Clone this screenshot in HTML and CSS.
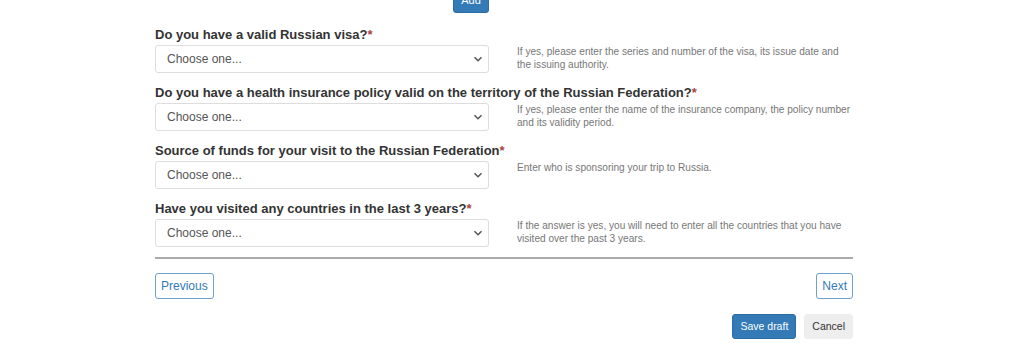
FILE: index.html
```html
<!DOCTYPE html>
<html>
<head>
<meta charset="utf-8">
<link rel="stylesheet" href="styles.css">
</head>
<body>
<div class="page">
  <div class="add-row">
    <div class="add-col"><button class="btn btn-primary btn-add">Add</button></div>
  </div>

  <div class="group">
    <label class="lbl">Do you have a valid Russian visa?<span class="req">*</span></label>
    <div class="row">
      <div class="sel-wrap">
        <select class="sel"><option>Choose one...</option></select>
        <svg class="chev" width="10" height="6" viewBox="0 0 10 6"><path d="M1.5 1.2 L5 4.7 L8.5 1.2" fill="none" stroke="#555" stroke-width="1.5"/></svg>
      </div>
      <p class="help">If yes, please enter the series and number of the visa, its issue date and the issuing authority.</p>
    </div>
  </div>

  <div class="group">
    <label class="lbl">Do you have a health insurance policy valid on the territory of the Russian Federation?<span class="req">*</span></label>
    <div class="row">
      <div class="sel-wrap">
        <select class="sel"><option>Choose one...</option></select>
        <svg class="chev" width="10" height="6" viewBox="0 0 10 6"><path d="M1.5 1.2 L5 4.7 L8.5 1.2" fill="none" stroke="#555" stroke-width="1.5"/></svg>
      </div>
      <p class="help">If yes, please enter the name of the insurance company, the policy number and its validity period.</p>
    </div>
  </div>

  <div class="group">
    <label class="lbl">Source of funds for your visit to the Russian Federation<span class="req">*</span></label>
    <div class="row">
      <div class="sel-wrap">
        <select class="sel"><option>Choose one...</option></select>
        <svg class="chev" width="10" height="6" viewBox="0 0 10 6"><path d="M1.5 1.2 L5 4.7 L8.5 1.2" fill="none" stroke="#555" stroke-width="1.5"/></svg>
      </div>
      <p class="help">Enter who is sponsoring your trip to Russia.</p>
    </div>
  </div>

  <div class="group last">
    <label class="lbl">Have you visited any countries in the last 3 years?<span class="req">*</span></label>
    <div class="row">
      <div class="sel-wrap">
        <select class="sel"><option>Choose one...</option></select>
        <svg class="chev" width="10" height="6" viewBox="0 0 10 6"><path d="M1.5 1.2 L5 4.7 L8.5 1.2" fill="none" stroke="#555" stroke-width="1.5"/></svg>
      </div>
      <p class="help">If the answer is yes, you will need to enter all the countries that you have visited over the past 3 years.</p>
    </div>
  </div>

  <hr class="sep">

  <div class="nav">
    <button class="btn btn-outline">Previous</button>
    <button class="btn btn-outline">Next</button>
  </div>

  <div class="actions">
    <button class="btn btn-primary btn-sm">Save draft</button>
    <button class="btn btn-light btn-sm">Cancel</button>
  </div>
</div>
</body>
</html>
```
FILE: styles.css
```css
* { box-sizing: border-box; }
html, body { margin: 0; padding: 0; background: #fff; }
body {
  font-family: "Liberation Sans", Arial, sans-serif;
  color: #333;
  overflow: hidden;
}
.page {
  width: 698px;
  margin-left: 155px;
}
.add-row {
  height: 15px;
}
.add-col {
  width: 334px;
  display: flex;
  justify-content: flex-end;
}
.btn {
  font-family: "Liberation Sans", Arial, sans-serif;
  border-radius: 3px;
  cursor: pointer;
  line-height: 1;
}
.btn-primary {
  background: #337ab7;
  border: 1px solid #2e6da4;
  color: #fff;
}
.btn-add {
  height: 26px;
  width: 36px;
  margin-top: -13px;
  font-size: 11px;
  padding: 0;
}
.group {
  padding-top: 10px;
}
.lbl {
  display: block;
  font-weight: bold;
  font-size: 13px;
  line-height: 20px;
  height: 20px;
  color: #333;
}
.req { color: #a94442; }
.row {
  display: grid;
  grid-template-columns: 334px 1fr;
  column-gap: 28px;
  align-items: start;
}
.sel-wrap {
  position: relative;
  height: 28px;
}
.sel {
  appearance: none;
  -webkit-appearance: none;
  width: 100%;
  height: 28px;
  border: 1px solid #ddd;
  border-radius: 3px;
  background: #fff;
  font-family: "Liberation Sans", Arial, sans-serif;
  font-size: 12px;
  color: #555;
  padding: 0 11px;
  outline: none;
}
.chev {
  position: absolute;
  right: 6px;
  top: 11px;
}
.help {
  margin: 0;
  padding-top: 0;
  font-size: 10.1px;
  line-height: 13px;
  color: #777;
}
.sep {
  margin: 10px 0 0 0;
  border: 0;
  border-top: 2px solid #aaa;
  height: 0;
}
.nav {
  display: flex;
  justify-content: space-between;
  margin-top: 14px;
}
.btn-outline {
  background: #fff;
  border: 1px solid #6fa0d0;
  color: #337ab7;
  font-size: 12px;
  height: 26px;
  padding: 0 5px;
}
.actions {
  display: flex;
  justify-content: flex-end;
  gap: 8px;
  margin-top: 15px;
}
.btn-sm {
  height: 25px;
  font-size: 10.5px;
  padding: 0 7px;
}
.btn-light {
  background: #eee;
  border: 1px solid #eee;
  color: #333;
}
```
